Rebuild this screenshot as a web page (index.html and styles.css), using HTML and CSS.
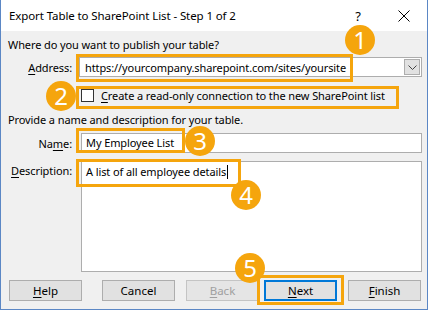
FILE: index.html
```html
<!DOCTYPE html>
<html lang="en">
<head>
    <meta charset="UTF-8">
    <title>Export Table to SharePoint List - Step 1 of 2</title>
    <link rel="stylesheet" href="styles.css">
</head>
<body>
    <div class="dialog">
        <div class="titlebar">
            <span class="title">Export Table to SharePoint List - Step 1 of 2</span>
            <span class="help-btn">?</span>
            <span class="close-btn">
                <svg width="12" height="12" viewBox="0 0 12 12"><path d="M0.5 0.5L11.5 11.5M11.5 0.5L0.5 11.5" stroke="#000" stroke-width="1"/></svg>
            </span>
        </div>
        <div class="content">
            <p class="prompt">Where do you want to publish your table?</p>
            <div class="row row-address">
                <label class="lbl"><u>A</u>ddress:</label>
                <div class="combo">
                    <span class="combo-text">https://yourcompany.sharepoint.com/sites/yoursite</span>
                    <span class="drop">
                        <svg width="9" height="5" viewBox="0 0 9 5"><path d="M0.5 0.5L4.5 4.5L8.5 0.5" fill="none" stroke="#444" stroke-width="1"/></svg>
                    </span>
                </div>
            </div>
            <div class="check-row">
                <span class="checkbox"></span>
                <span><u>C</u>reate a read-only connection to the new SharePoint list</span>
            </div>
            <p class="prompt prompt-2">Provide a name and description for your table.</p>
            <div class="row row-name">
                <label class="lbl">Na<u>m</u>e:</label>
                <div class="field">My Employee List</div>
            </div>
            <div class="row row-desc">
                <label class="lbl"><u>D</u>escription:</label>
                <div class="field area">A list of all employee details<span class="caret"></span></div>
            </div>
            <div class="buttons">
                <button class="btn btn-help"><u>H</u>elp</button>
                <button class="btn btn-cancel">Cancel</button>
                <button class="btn btn-back" disabled><u>B</u>ack</button>
                <button class="btn btn-next"><u>N</u>ext</button>
                <button class="btn btn-finish"><u>F</u>inish</button>
            </div>
        </div>

        <!-- callouts drawn over the dialog -->
        <div class="mark-box box-1"></div>
        <div class="mark-box box-2"></div>
        <div class="mark-box box-3"></div>
        <div class="mark-box box-4"></div>
        <div class="mark-box box-5"></div>
        <div class="step step-1">1</div>
        <div class="step step-2">2</div>
        <div class="step step-3">3</div>
        <div class="step step-4">4</div>
        <div class="step step-5">5</div>
    </div>
</body>
</html>
```

FILE: styles.css
```css
/* Base */
* {
    box-sizing: border-box;
}

body {
    margin: 0;
    font-family: "Noto Sans", "Open Sans", sans-serif;
    font-size: 11px;
    letter-spacing: -0.1px;
    color: #000;
}

u {
    text-decoration-thickness: 1px;
    text-underline-offset: 2px;
}

/* Dialog frame */
.dialog {
    position: relative;
    width: 428px;
    height: 310px;
    border: 1px solid #5b87c5;
    border-top: none;
    background: #f0f0f0;
    overflow: hidden;
}

.titlebar {
    display: flex;
    align-items: center;
    height: 31px;
    padding-left: 8px;
    background: #fff;
    font-size: 11.5px;
}

.title {
    flex: 1;
}

.help-btn {
    width: 46px;
    text-align: center;
    font-size: 13px;
}

.close-btn {
    display: flex;
    justify-content: center;
    width: 46px;
}

/* Form content */
.content {
    padding: 5px 0 0 7px;
}

.prompt {
    margin: 0;
    height: 17px;
    line-height: 17px;
}

.row {
    display: flex;
    align-items: center;
}

.lbl {
    width: 64px;
    text-align: right;
    margin-right: 8px;
}

.row-address {
    margin-top: 4px;
}

.combo {
    display: flex;
    align-items: center;
    width: 343px;
    height: 20px;
    margin-left: -1px;
    border: 1px solid #adadad;
    background: #fff;
    padding-left: 5px;
}

.combo-text {
    flex: 1;
}

.drop {
    display: flex;
    align-items: center;
    justify-content: center;
    width: 16px;
    height: 16px;
    margin-right: 1px;
    border: 1px solid #adadad;
    background: #e1e1e1;
}

.check-row {
    display: flex;
    align-items: center;
    gap: 7px;
    height: 14px;
    margin: 11px 0 0 73px;
}

.checkbox {
    width: 13px;
    height: 13px;
    border: 1px solid #333;
    background: #fff;
}

.prompt-2 {
    margin-top: 9px;
}

.row-name {
    margin-top: 5px;
}

.field {
    width: 341px;
    height: 20px;
    line-height: 18px;
    margin-left: 1px;
    padding-left: 4px;
    border: 1px solid #adadad;
    background: #fff;
}

.row-desc {
    align-items: flex-start;
    margin-top: 8px;
}

.row-desc .lbl {
    padding-top: 2px;
}

.area {
    height: 111px;
    padding-top: 1px;
}

.caret {
    display: inline-block;
    width: 1px;
    height: 14px;
    margin-left: 1px;
    vertical-align: -3px;
    background: #000;
}

/* Buttons */
.buttons {
    display: flex;
    margin-top: 8px;
    margin-left: 1px;
}

.btn {
    width: 73px;
    height: 21px;
    padding: 0;
    font-family: inherit;
    font-size: 11.5px;
    color: #000;
    background: #e1e1e1;
    border: 1px solid #adadad;
}

.btn-cancel {
    margin-left: 20px;
}

.btn-back {
    margin-left: 11px;
    color: #a0a0a0;
    background: #e5e5e5;
    border-color: #c4c4c4;
}

.btn-next {
    margin-left: 5px;
    border: 2px solid #0078d7;
}

.btn-finish {
    margin-left: 11px;
}

/* Callouts */
.mark-box {
    position: absolute;
    border: 3px solid #f5a50d;
}

.box-1 { left: 75px; top: 54px; width: 277px; height: 28px; }
.box-2 { left: 75px; top: 86px; width: 323px; height: 23px; }
.box-3 { left: 75px; top: 128px; width: 109px; height: 25px; }
.box-4 { left: 75px; top: 159px; width: 165px; height: 28px; }
.box-5 { left: 256px; top: 275px; width: 87px; height: 30px; }

.step {
    position: absolute;
    width: 30px;
    height: 30px;
    border-radius: 50%;
    background: #f5a50d;
    color: #fff;
    font-size: 24px;
    letter-spacing: 0;
    line-height: 30px;
    text-align: center;
}

.step-1 { left: 344px; top: 25px; }
.step-2 { left: 45px; top: 81px; }
.step-3 { left: 184px; top: 126px; }
.step-4 { left: 230px; top: 180px; }
.step-5 { left: 234px; top: 253px; }
```
